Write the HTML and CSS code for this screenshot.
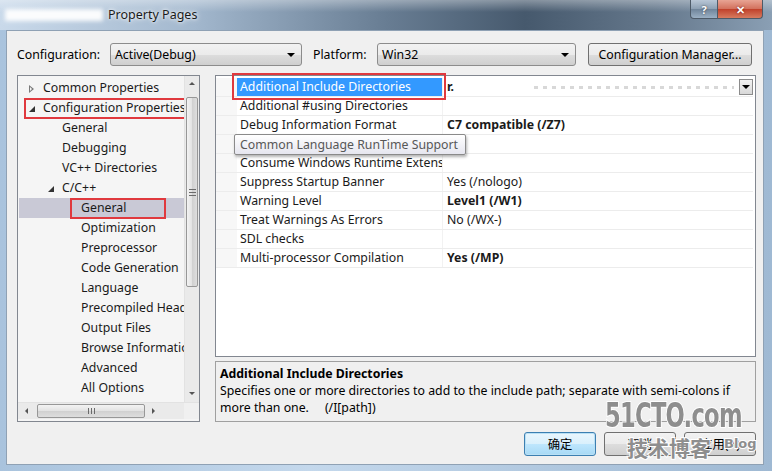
FILE: index.html
```html
<!DOCTYPE html>
<html lang="en">
<head>
    <meta charset="UTF-8">
    <title>Property Pages</title>
    <link rel="stylesheet" href="styles.css">
</head>
<body>

<div class="window">
    <div class="titlebar">
        <span class="title-blur"></span>
        <span class="title">Property Pages</span>
        <div class="caption-btns">
            <span class="cap help">?</span>
            <span class="cap close">&#x2715;</span>
        </div>
    </div>

    <div class="client">
        <div class="config-row">
            <label class="lbl-config">Configuration:</label>
            <div class="combo combo-config">Active(Debug)<span class="arrow"></span></div>
            <label class="lbl-platform">Platform:</label>
            <div class="combo combo-platform">Win32<span class="arrow"></span></div>
            <button class="btn cfg-mgr">Configuration Manager...</button>
        </div>

        <div class="main">
            <!-- left tree -->
            <div class="tree">
                <div class="tree-body">
                    <ul class="tree-list">
                        <li class="lvl0"><span class="tw closed"></span>Common Properties</li>
                        <li class="lvl0"><span class="tw open"></span>Configuration Properties<span class="mark mark-config"></span></li>
                        <li class="lvl1">General</li>
                        <li class="lvl1">Debugging</li>
                        <li class="lvl1">VC++ Directories</li>
                        <li class="lvl1"><span class="tw open"></span>C/C++</li>
                        <li class="lvl2 selected">General<span class="mark mark-general"></span></li>
                        <li class="lvl2">Optimization</li>
                        <li class="lvl2">Preprocessor</li>
                        <li class="lvl2">Code Generation</li>
                        <li class="lvl2">Language</li>
                        <li class="lvl2">Precompiled Headers</li>
                        <li class="lvl2">Output Files</li>
                        <li class="lvl2">Browse Information</li>
                        <li class="lvl2">Advanced</li>
                        <li class="lvl2">All Options</li>
                        <li class="lvl2">Command Line</li>
                    </ul>
                    <div class="vscroll">
                        <span class="sb-arrow up"></span>
                        <div class="sb-track">
                            <div class="sb-thumb v"><span class="grip-v"></span></div>
                        </div>
                        <span class="sb-arrow down"></span>
                    </div>
                </div>
                <div class="hscroll">
                    <span class="sb-arrow left"></span>
                    <div class="sb-track h">
                        <div class="sb-thumb h"><span class="grip-h"></span></div>
                    </div>
                    <span class="sb-arrow right"></span>
                    <span class="sb-corner"></span>
                </div>
            </div>

            <!-- property grid + description -->
            <div class="right">
                <div class="grid">
                    <div class="row">
                        <span class="gutter"></span>
                        <span class="name sel">Additional Include Directories</span>
                        <span class="value"><b>r.</b><span class="redacted"></span><span class="dd-btn"></span></span>
                        <span class="mark mark-row"></span>
                    </div>
                    <div class="row">
                        <span class="gutter"></span>
                        <span class="name">Additional #using Directories</span>
                        <span class="value"></span>
                    </div>
                    <div class="row">
                        <span class="gutter"></span>
                        <span class="name">Debug Information Format</span>
                        <span class="value"><b>C7 compatible (/Z7)</b></span>
                    </div>
                    <div class="row">
                        <span class="gutter"></span>
                        <span class="name">Common Language RunTime Support</span>
                        <span class="value"></span>
                        <span class="tooltip">Common Language RunTime Support</span>
                    </div>
                    <div class="row">
                        <span class="gutter"></span>
                        <span class="name">Consume Windows Runtime Extension</span>
                        <span class="value"></span>
                    </div>
                    <div class="row">
                        <span class="gutter"></span>
                        <span class="name">Suppress Startup Banner</span>
                        <span class="value">Yes (/nologo)</span>
                    </div>
                    <div class="row">
                        <span class="gutter"></span>
                        <span class="name">Warning Level</span>
                        <span class="value"><b>Level1 (/W1)</b></span>
                    </div>
                    <div class="row">
                        <span class="gutter"></span>
                        <span class="name">Treat Warnings As Errors</span>
                        <span class="value">No (/WX-)</span>
                    </div>
                    <div class="row">
                        <span class="gutter"></span>
                        <span class="name">SDL checks</span>
                        <span class="value"></span>
                    </div>
                    <div class="row">
                        <span class="gutter"></span>
                        <span class="name">Multi-processor Compilation</span>
                        <span class="value"><b>Yes (/MP)</b></span>
                    </div>
                </div>
                <div class="desc">
                    <div class="desc-title">Additional Include Directories</div>
                    <div class="desc-text">Specifies one or more directories to add to the include path; separate with semi-colons if more than one.&nbsp;&nbsp;&nbsp;&nbsp;&nbsp;(/I[path])</div>
                </div>
            </div>
        </div>

        <div class="buttons">
            <button class="btn dlg default">确定</button>
            <button class="btn dlg">取消</button>
            <button class="btn dlg">应用(A)</button>
        </div>
    </div>

    <div class="watermark">
        <span class="wm-site">51CTO.com</span>
        <span class="wm-blog">技术博客</span>
        <span class="wm-en">Blog</span>
    </div>
</div>

</body>
</html>
```

FILE: styles.css
```css
* {
  box-sizing: border-box;
}

body {
  margin: 0;
  padding: 0;
  font-family: "Noto Sans", "Noto Sans CJK SC", sans-serif;
  font-size: 12.3px;
  color: #000;
}

.window {
  position: relative;
  width: 772px;
  height: 471px;
  overflow: hidden;
  background: linear-gradient(to right, #a9c3dd, #c4d8ec 40%, #9fb9d3 100%);
}

/* title bar */
.titlebar {
  position: relative;
  height: 30px;
  display: flex;
  align-items: center;
  background: linear-gradient(to right, #c9d9ea 0%, #a3b8ce 25%, #687d93 50%, #46596d 68%, #65788c 85%, #8a9fb4 100%);
}

.titlebar::after {
  content: '';
  position: absolute;
  left: 0;
  right: 0;
  top: 0;
  height: 12px;
  background: linear-gradient(to bottom, rgba(255, 255, 255, 0.35), rgba(255, 255, 255, 0));
}

.title-blur {
  width: 98px;
  height: 12px;
  margin-left: 5px;
  background: #fff;
  filter: blur(2px);
  opacity: 0.95;
}

.title {
  margin-left: 5px;
  font-size: 12.5px;
  color: #1a1a1a;
  text-shadow: 0 0 6px #fff, 0 0 3px #fff;
  margin-top: -2px;
}

.caption-btns {
  position: absolute;
  top: 0;
  right: 9px;
  display: flex;
  z-index: 2;
}

.cap {
  height: 19px;
  display: flex;
  align-items: center;
  justify-content: center;
  color: #fff;
  font-weight: bold;
  border: 1px solid #4d5a68;
  border-top: none;
}

.cap.help {
  width: 28px;
  font-size: 11px;
  border-radius: 0 0 0 4px;
  background: linear-gradient(to bottom, #b9c7d6, #8c9fb3 50%, #6f849a 51%, #9bb0c4);
  text-shadow: 0 0 2px #333;
}

.cap.close {
  width: 45px;
  font-size: 11px;
  border-left: none;
  border-radius: 0 0 4px 0;
  background: linear-gradient(to bottom, #e8a494, #d2705c 50%, #c0412b 51%, #d77b5f);
  text-shadow: 0 0 2px #600;
}

/* client area */
.client {
  margin: 0 8px 0 6px;
  height: 435px;
  background: #f0f0f0;
  border: 1px solid #8fa1b4;
  padding: 12px 7px 0 10px;
}

.config-row {
  display: flex;
  align-items: center;
  height: 23px;
}

.lbl-config {
  width: 93px;
}

.lbl-platform {
  margin-left: 11px;
  width: 64px;
}

.combo {
  position: relative;
  height: 23px;
  border: 1px solid #8c8c8c;
  border-radius: 3px;
  background: linear-gradient(to bottom, #f2f2f2, #ebebeb 50%, #dddddd 51%, #cfcfcf);
  padding: 2px 0 0 4px;
}

.combo-config {
  width: 192px;
}

.combo-platform {
  width: 199px;
}

.combo .arrow {
  position: absolute;
  right: 6px;
  top: 9px;
  border-left: 4px solid transparent;
  border-right: 4px solid transparent;
  border-top: 4px solid #000;
}

.btn {
  font-family: "Noto Sans", "Noto Sans CJK SC", sans-serif;
  font-size: 12.3px;
  height: 23px;
  border: 1px solid #707070;
  border-radius: 3px;
  background: linear-gradient(to bottom, #f2f2f2, #ebebeb 50%, #dddddd 51%, #cfcfcf);
  padding: 0;
  color: #000;
}

.cfg-mgr {
  margin-left: 12px;
  width: 164px;
}

/* main area */
.main {
  display: flex;
  gap: 15px;
  margin-top: 9px;
  height: 347px;
}

/* tree */
.tree {
  width: 183px;
  border: 1px solid #828790;
  background: #f5f5f5;
  display: flex;
  flex-direction: column;
}

.tree-body {
  flex: 1;
  display: flex;
  overflow: hidden;
}

.tree-list {
  flex: 1;
  list-style: none;
  margin: 0;
  padding: 2px 0 0 1px;
  overflow: hidden;
}

.tree-list li {
  position: relative;
  height: 20px;
  line-height: 20px;
  white-space: nowrap;
  color: #1a1a1a;
}

.tree-list .lvl0 {
  padding-left: 24px;
}

.tree-list .lvl1 {
  padding-left: 43px;
}

.tree-list .lvl2 {
  padding-left: 62px;
}

.tree-list li.selected {
  background: #c9c9d6;
}

.tw {
  position: absolute;
  top: 7px;
  width: 0;
  height: 0;
}

.lvl0 .tw {
  left: 10px;
}

.lvl1 .tw {
  left: 29px;
}

.tw.closed {
  border-top: 4px solid transparent;
  border-bottom: 4px solid transparent;
  border-left: 5px solid #7a7a7a;
}

.tw.closed::after {
  content: '';
  position: absolute;
  left: -4px;
  top: -2px;
  border-top: 2px solid transparent;
  border-bottom: 2px solid transparent;
  border-left: 2px solid #f5f5f5;
}

.tw.open {
  top: 8px;
  border-left: 6px solid transparent;
  border-bottom: 6px solid #333;
}

/* red annotation boxes */
.mark {
  position: absolute;
  border: 2px solid #e0393e;
  z-index: 3;
  pointer-events: none;
}

.mark-config {
  left: 5px;
  top: 0;
  width: 171px;
  height: 21px;
}

.mark-general {
  left: 51px;
  top: 0;
  width: 96px;
  height: 21px;
}

.mark-row {
  left: 16px;
  top: -5px;
  width: 214px;
  height: 27px;
}

/* scrollbars */
.vscroll {
  width: 15px;
  display: flex;
  flex-direction: column;
  background: #eaeaea;
  border-left: 1px solid #e2e2e2;
}

.sb-arrow {
  position: relative;
  width: 15px;
  height: 16px;
  flex: none;
}

.sb-arrow::after {
  content: '';
  position: absolute;
  left: 4px;
  top: 6px;
  width: 0;
  height: 0;
}

.sb-arrow.up::after {
  border-left: 3px solid transparent;
  border-right: 3px solid transparent;
  border-bottom: 3px solid #555;
}

.sb-arrow.down::after {
  border-left: 3px solid transparent;
  border-right: 3px solid transparent;
  border-top: 3px solid #555;
}

.sb-track {
  flex: 1;
  padding: 5px 1px 0 1px;
}

.sb-thumb {
  border: 1px solid #979797;
  border-radius: 2px;
  display: flex;
  align-items: center;
  justify-content: center;
}

.sb-thumb.v {
  height: 190px;
  background: linear-gradient(to right, #f3f3f3, #e2e2e2 50%, #d0d0d0 51%, #dedede);
}

.grip-v {
  width: 7px;
  height: 7px;
  border-top: 1px solid #6b6b6b;
  border-bottom: 1px solid #6b6b6b;
  background: linear-gradient(to bottom, transparent 2px, #6b6b6b 2px, #6b6b6b 3px, transparent 3px);
}

.hscroll {
  height: 17px;
  display: flex;
  background: #eaeaea;
  border-top: 1px solid #e2e2e2;
  margin-bottom: 2px;
}

.sb-arrow.left,
.sb-arrow.right {
  height: 16px;
  width: 17px;
}

.sb-arrow.left::after {
  left: 7px;
  top: 5px;
  border-top: 3px solid transparent;
  border-bottom: 3px solid transparent;
  border-right: 3px solid #555;
}

.sb-arrow.right::after {
  left: 7px;
  top: 5px;
  border-top: 3px solid transparent;
  border-bottom: 3px solid transparent;
  border-left: 3px solid #555;
}

.sb-track.h {
  padding: 1px 0 0 2px;
}

.sb-thumb.h {
  width: 108px;
  height: 14px;
  background: linear-gradient(to bottom, #f3f3f3, #e2e2e2 50%, #d0d0d0 51%, #dedede);
}

.grip-h {
  width: 7px;
  height: 6px;
  border-left: 1px solid #6b6b6b;
  border-right: 1px solid #6b6b6b;
  background: linear-gradient(to right, transparent 2px, #6b6b6b 2px, #6b6b6b 3px, transparent 3px);
}

.sb-corner {
  width: 15px;
  background: #f0f0f0;
}

/* property grid */
.right {
  flex: 1;
  display: flex;
  flex-direction: column;
  gap: 4px;
}

.grid {
  height: 283px;
  border: 1px solid #828790;
  background: #fff;
  padding: 2px 2px 0 0;
}

.row {
  position: relative;
  display: flex;
  height: 19px;
  line-height: 18px;
  border-bottom: 1px solid #ececec;
}

.gutter {
  width: 21px;
  flex: none;
  background: #f7f7f7;
}

.name {
  width: 205px;
  flex: none;
  padding-left: 3px;
  white-space: nowrap;
  overflow: hidden;
  color: #1a1a1a;
}

.name.sel {
  background: #3399ff;
  color: #fff;
  height: 18px;
}

.value {
  position: relative;
  flex: 1;
  padding-left: 4px;
  border-left: 1px solid #f2f2f2;
  white-space: nowrap;
  color: #1a1a1a;
}

.value b {
  font-weight: bold;
}

.redacted {
  display: inline-block;
  width: 200px;
  height: 3px;
  margin-left: 80px;
  vertical-align: middle;
  background: repeating-linear-gradient(to right, #d8d8d8 0, #d8d8d8 4px, transparent 4px, transparent 9px);
}

.dd-btn {
  position: absolute;
  right: 0;
  top: 1px;
  width: 14px;
  height: 16px;
  border: 1px solid #8c8c8c;
  background: linear-gradient(to bottom, #f2f2f2, #d8d8d8);
}

.dd-btn::after {
  content: '';
  position: absolute;
  left: 2px;
  top: 5px;
  border-left: 4px solid transparent;
  border-right: 4px solid transparent;
  border-top: 4px solid #000;
}

.tooltip {
  position: absolute;
  left: 18px;
  top: -1px;
  width: 232px;
  height: 21px;
  line-height: 19px;
  padding-left: 5px;
  border: 1px solid #8a8a8a;
  border-radius: 2px;
  background: linear-gradient(to bottom, #ffffff, #e6e6ef);
  color: #575757;
  white-space: nowrap;
  overflow: hidden;
  box-shadow: 1px 2px 3px rgba(0, 0, 0, 0.3);
  z-index: 2;
}

/* description */
.desc {
  height: 61px;
  border: 1px solid #a0a0a0;
  background: #f0f0f0;
  padding: 3px 4px;
  line-height: 17px;
}

.desc-title {
  font-weight: bold;
}

/* bottom buttons */
.buttons {
  display: flex;
  justify-content: flex-end;
  gap: 8px;
  margin-top: 10px;
  padding-right: 0;
}

.btn.dlg {
  width: 72px;
  height: 24px;
}

.btn.dlg.default {
  border-color: #3c7fb1;
  background: linear-gradient(to bottom, #eaf6fd, #d9f0fc 50%, #bee6fd 51%, #a7d9f5);
  box-shadow: inset 0 0 0 1px #b9e0f5;
}

/* watermark over the corner */
.watermark {
  position: absolute;
  left: 603px;
  top: 400px;
  width: 165px;
  height: 68px;
  z-index: 5;
}

.wm-site {
  position: absolute;
  left: 2px;
  top: -5px;
  font-family: "DejaVu Sans Condensed", "DejaVu Sans", sans-serif;
  font-weight: bold;
  font-size: 34px;
  letter-spacing: -1px;
  transform: scaleX(0.74);
  transform-origin: left;
  color: #8e8e8e;
  -webkit-text-stroke: 2px #ffffff;
  paint-order: stroke fill;
}

.wm-blog {
  position: absolute;
  left: 24px;
  top: 32px;
  font-family: "Noto Sans CJK SC", sans-serif;
  font-weight: bold;
  font-size: 21px;
  color: #8e8e8e;
  -webkit-text-stroke: 2px #ffffff;
  paint-order: stroke fill;
}

.wm-en {
  position: absolute;
  left: 121px;
  top: 36px;
  font-family: "DejaVu Sans", sans-serif;
  font-weight: bold;
  font-size: 13px;
  color: #8e8e8e;
  -webkit-text-stroke: 2px #ffffff;
  paint-order: stroke fill;
}
```
